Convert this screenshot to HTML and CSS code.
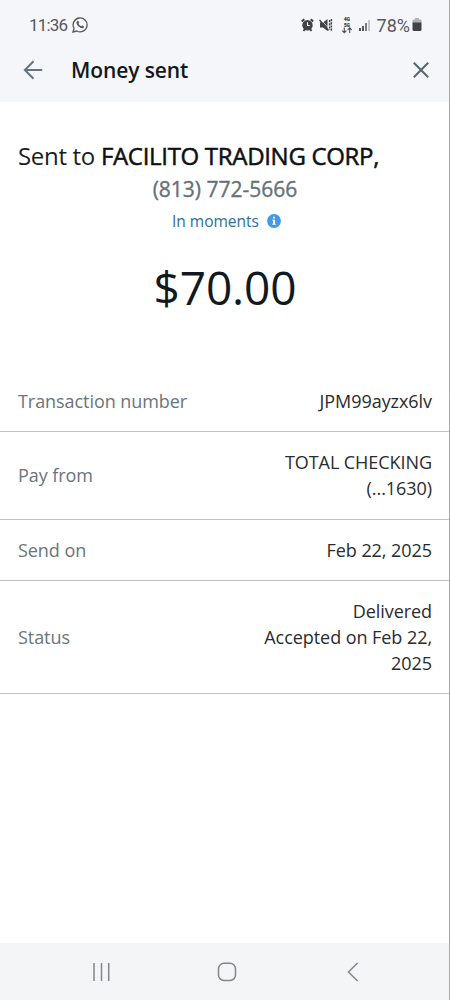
FILE: index.html
```html
<!DOCTYPE html>
<html lang="en">
<head>
<meta charset="utf-8">
<title>Money sent</title>
<link rel="stylesheet" href="styles.css">
</head>
<body>
<div class="screen">
  <header class="top">
    <div class="status-bar">
      <div class="status-left">
        <span class="clock">11:36</span>
        <svg class="whatsapp" width="16" height="16" viewBox="0 0 16 16" fill="none" stroke="#55585d"><path stroke-width="1.3" d="M1 15l1-3.700A7 7 0 1 1 4.700 14z"/><path fill="#55585d" stroke="none" d="M5.200 4.200c.7-.6 1.200-.3 1.400.2l.5 1.200c.1.500-.5.900-.6 1.200.6 1.200 1.500 2 2.700 2.500.4-.1.800-.9 1.200-.8l1.400.7c.4.300.1 1.200-.4 1.700-2 1.500-7-2-6.900-5.300 0-.6.300-1.100.7-1.400z"/></svg>
      </div>
      <div class="status-right">
        <svg class="alarm" width="13" height="14" viewBox="0 0 13 14"><path stroke="#3f4247" stroke-width="2" d="M.8 3.500L3.300 1.200M12.200 3.500L9.700 1.200M2.500 13l1.500-2M10.500 13L9 11"/><circle cx="6.500" cy="7.200" r="5.200" fill="#3f4247"/><path d="M6.500 4.300v3.200h2.300" fill="none" stroke="#f4f6fa" stroke-width="1.100"/></svg>
        <svg class="mute" width="14" height="14" viewBox="0 0 14 14"><path fill="#3f4247" d="M1 4.500h3L8.500 1v12L4 9.500H1z"/><path stroke="#f4f6fa" stroke-width=".7" d="M1.500 1l8.500 9.500"/><path stroke="#3f4247" stroke-width="1.400" fill="none" d="M.5 2l9 10.500"/><path stroke="#3f4247" stroke-width="1.400" stroke-dasharray="2.200 1" d="M10.600 2v10M12.400 1v12"/></svg>
        <svg class="network" width="12" height="17" viewBox="0 0 12 17"><text class="net-label" x="6" y="4.300">4G</text><text class="net-label" x="6" y="9.800">5G</text><path fill="none" stroke="#4c4f54" stroke-width="1.100" d="M3.300 10.500v5M1.300 13.600l2 2 2-2M8.700 16v-5M6.700 12.800l2-2 2 2"/></svg>
        <svg class="signal" width="13" height="13" viewBox="0 0 13 13"><path fill="#55585d" d="M1 9h2v3H1zM4 7h2v5H4z"/><path fill="#7b7e83" d="M7 4h2v8H7z"/><path fill="#c5c7cb" d="M10 1h2v11h-2z"/></svg>
        <span class="percent">78%</span>
        <svg class="battery" width="10" height="14" viewBox="0 0 10 14"><path fill="#aeb0b4" d="M3 0h4v1.500h1.500q1 0 1 1V5H.5V2.500q0-1 1-1H3z"/><path fill="#3f4247" d="M.5 4.500h9v7q0 1.500-1.500 1.500H2Q.5 13 .5 11.500z"/></svg>
      </div>
    </div>
    <div class="title-bar">
      <svg class="back" width="20" height="20" viewBox="0 0 20 20" fill="none" stroke="#66737e" stroke-width="2"><path d="M19.200 10H2M10.500 1.300L1.900 10l8.600 8.700"/></svg>
      <h1 class="title">Money sent</h1>
      <svg class="close" width="18" height="18" viewBox="0 0 18 18" fill="none" stroke="#56656e" stroke-width="2"><path d="M1.800 1.800l14.400 14.400M16.200 1.800L1.800 16.200"/></svg>
    </div>
  </header>
  <main class="content">
    <section class="summary">
      <p class="recipient">Sent to <strong class="name">FACILITO TRADING CORP,</strong></p>
      <p class="phone">(813) 772-5666</p>
      <p class="timing"><span class="timing-text">In moments</span><svg width="14" height="14" viewBox="0 0 14 14"><circle cx="7" cy="7" r="6.900" fill="#429be8"/><path fill="#fff" d="M6 2.800h2v1.800H6zM5.300 5.800H8v4h.8v1H5.300v-1H6v-3h-.7z"/></svg></p>
      <p class="amount">$70.00</p>
    </section>
    <dl class="details">
      <div class="row"><dt class="label">Transaction number</dt><dd class="value">JPM99ayzx6lv</dd></div>
      <div class="row"><dt class="label">Pay from</dt><dd class="value">TOTAL CHECKING<br>(...1630)</dd></div>
      <div class="row"><dt class="label">Send on</dt><dd class="value">Feb 22, 2025</dd></div>
      <div class="row"><dt class="label">Status</dt><dd class="value">Delivered<br>Accepted on Feb 22,<br>2025</dd></div>
    </dl>
  </main>
  <nav class="nav">
    <svg class="recents" width="20" height="20" viewBox="0 0 20 20" stroke="#85868a" stroke-width="1.500"><path d="M2 1v18M9.500 1v18M16.700 1v18"/></svg>
    <svg class="home" width="20" height="20" viewBox="0 0 20 20" fill="none" stroke="#85868a" stroke-width="1.500"><rect x="1.500" y="1.300" width="17" height="17.200" rx="5.500"/></svg>
    <svg class="nav-back" width="12" height="20" viewBox="0 0 12 20" fill="none" stroke="#85868a" stroke-width="1.500"><path d="M10.500 1L1.500 10l9 9"/></svg>
  </nav>
</div>
</body>
</html>
```
FILE: styles.css
```css
* { box-sizing: border-box; }
body { margin: 0; background: #fff; font-family: "Open Sans", "Noto Sans", sans-serif; }
p, h1, dl, dd { margin: 0; }
svg { display: block; flex: none; }
.screen { width: 450px; height: 1000px; display: flex; flex-direction: column; border-right: 1px solid #a6a7aa; background: #fff; overflow: hidden; }
.top { height: 102px; background: #f4f6fa; flex: none; }
.status-bar { height: 50px; padding: 0 27px 0 29px; display: flex; justify-content: space-between; align-items: center; font-family: Roboto, sans-serif; font-size: 17px; color: #55585d; }
.status-left, .status-right { display: flex; align-items: center; }
.clock { letter-spacing: -0.8px; }
.whatsapp { margin-left: 5px; }
.mute { margin-left: 5px; }
.network { margin-left: 8px; }
.signal { margin-left: 5px; }
.percent { margin-left: 6px; font-size: 18px; }
.battery { margin-left: 2px; }
.net-label { font: bold 4.600px Roboto, sans-serif; fill: #3f4247; stroke: #3f4247; stroke-width: 0.2px; text-anchor: middle; }
.title-bar { height: 40px; padding: 0 19px 0 23px; display: flex; align-items: center; }
.title { margin-left: 28px; flex: 1; font-size: 21px; line-height: 28px; font-weight: 600; letter-spacing: -0.1px; color: #14181d; white-space: nowrap; }
.content { flex: 1; }
.summary { padding: 38px 0 0 18px; }
.recipient { font-size: 24px; line-height: 32px; letter-spacing: -0.31px; color: #191d21; white-space: nowrap; }
.name { font-weight: 400; -webkit-text-stroke: 0.5px #0d1116; color: #0d1116; }
.phone { margin-right: 17px; padding-top: 1px; font-size: 21px; line-height: 32px; -webkit-text-stroke: 0.35px #65717a; text-align: center; color: #65717a; }
.timing { margin-right: 14px; height: 32px; display: flex; align-items: center; justify-content: center; gap: 8px; font-size: 15.500px; color: #2c6f9d; }
.amount { margin-right: 17px; margin-top: 18px; font-size: 46px; line-height: 64px; letter-spacing: -0.1px; text-align: center; color: #111920; }
.details { margin-top: 50.500px; }
.row { padding: 18px 17px 16.600px 18px; display: flex; align-items: center; justify-content: space-between; border-bottom: 1px solid #bfc0c2; font-size: 18px; line-height: 25.8px; letter-spacing: -0.06px; }
.row:first-child { padding-top: 19.500px; }
.label { color: #69757c; white-space: nowrap; }
.value { text-align: right; color: #282c30; white-space: nowrap; }
.nav { height: 57px; flex: none; padding: 0 90px 0 92px; display: grid; grid-template-columns: 125px 1fr auto; align-items: center; background: #f4f5f7; }
```
